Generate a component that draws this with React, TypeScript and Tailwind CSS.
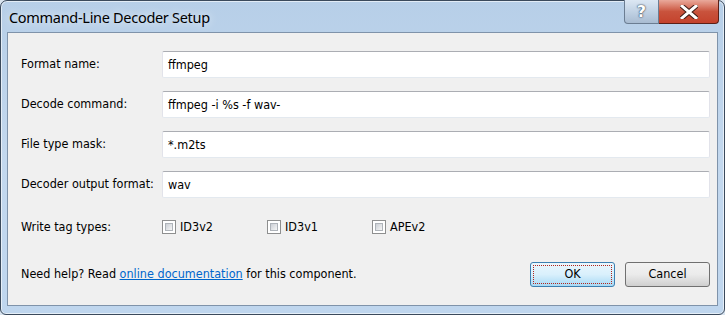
import React from 'react';

const UI = "font-['DejaVu_Sans_Condensed','DejaVu_Sans',sans-serif] text-[12.5px] text-black";

const fields = [
  { label: 'Format name:', value: 'ffmpeg' },
  { label: 'Decode command:', value: 'ffmpeg -i %s -f wav-' },
  { label: 'File type mask:', value: '*.m2ts' },
  { label: 'Decoder output format:', value: 'wav' },
];

const tags = ['ID3v2', 'ID3v1', 'APEv2'];

function Checkbox({ label }: { label: string }) {
  return (
    <label className="flex items-center w-[105px] h-[14px]">
      <span className="w-[14px] h-[14px] border border-[#8e8f8f] bg-white p-[2px] shrink-0">
        <span className="block w-full h-full bg-gradient-to-br from-[#cbcfd5] to-[#f6f6f6] border border-[#aeb3b9]" />
      </span>
      <span className="ml-[4px] leading-none">{label}</span>
    </label>
  );
}

export default function App() {
  return (
    <div className="w-[725px] h-[315px] bg-[#d9e4ef] overflow-hidden">
      <div className="w-full h-full flex flex-col rounded-t-[7px] rounded-b-[6px] border border-[#3b4a5c] bg-gradient-to-b from-[#b7cfe8] via-[#c3d8ee] to-[#bfd6ee] px-[6px] pb-[8px] shadow-[inset_0_0_0_1px_rgba(255,255,255,0.6)]">
        {/* title bar */}
        <div className="h-[31px] flex items-start relative">
          <span className="mt-[6px] ml-[2px] font-['Noto_Sans',sans-serif] text-[14.5px] tracking-[-0.3px] text-black [text-shadow:0_0_8px_rgba(255,255,255,0.9)]">
            Command-Line Decoder Setup
          </span>
          <div className="ml-auto mr-[-1px] flex h-[24px] mt-[-1px]">
            <div className="w-[35px] h-full flex items-center justify-center rounded-bl-[4px] border border-[#6b7d92] border-t-0 bg-gradient-to-b from-[#dce7f3] via-[#c1d2e4] to-[#a9bcd2] text-white font-['DejaVu_Sans',sans-serif] font-bold text-[16px] [text-shadow:0_0_2px_#2c3b4d,0_0_1px_#2c3b4d]">
              ?
            </div>
            <div className="w-[60px] h-full flex items-center justify-center rounded-br-[4px] border border-l-0 border-[#5c1f16] border-t-0 bg-gradient-to-b from-[#e9a99b] via-[#c9533d] to-[#c4422c]">
              <svg width="18" height="14" viewBox="0 0 18 14">
                <path d="M2 1 L16 13 M16 1 L2 13" stroke="#3a1a14" strokeWidth="5" strokeLinecap="square" />
                <path d="M2 1 L16 13 M16 1 L2 13" stroke="#ffffff" strokeWidth="3" strokeLinecap="square" />
              </svg>
            </div>
          </div>
        </div>

        {/* client area */}
        <div className={`flex-1 flex flex-col bg-[#f0f0f0] border border-[#7f93aa] pt-[18px] pl-[13px] pr-[7px] ${UI}`}>
          <div className="flex flex-col gap-[13px]">
            {fields.map((f) => (
              <div key={f.label} className="flex items-center h-[27px]">
                <span className="w-[141px] shrink-0">{f.label}</span>
                <div className="flex-1 h-full bg-white border border-[#e2e3ea] border-t-[#abadb3] border-b-[#e3e9ef] rounded-[2px] pl-[5px] pt-[4px]">
                  {f.value}
                </div>
              </div>
            ))}
          </div>

          <div className="flex items-center mt-[22px] h-[14px]">
            <span className="w-[141px] shrink-0">Write tag types:</span>
            {tags.map((t) => (
              <Checkbox key={t} label={t} />
            ))}
          </div>

          <div className="flex items-center mt-[28px] h-[25px]">
            <span>
              Need help? Read{' '}
              <a className="text-[#0066cc] underline">online documentation</a> for this component.
            </span>
            <button className="ml-auto w-[85px] h-full rounded-[3px] border border-[#3c7fb1] bg-gradient-to-b from-[#eaf6fd] via-[#d9f0fc] to-[#a7d9f5] p-[2px]">
              <span className="flex items-center justify-center w-full h-full border border-dotted border-[#b3261e]">OK</span>
            </button>
            <button className="ml-[10px] w-[85px] h-full rounded-[3px] border border-[#707070] bg-gradient-to-b from-[#f2f2f2] via-[#ebebeb] to-[#cfcfcf]">
              Cancel
            </button>
          </div>
        </div>
      </div>
    </div>
  );
}
